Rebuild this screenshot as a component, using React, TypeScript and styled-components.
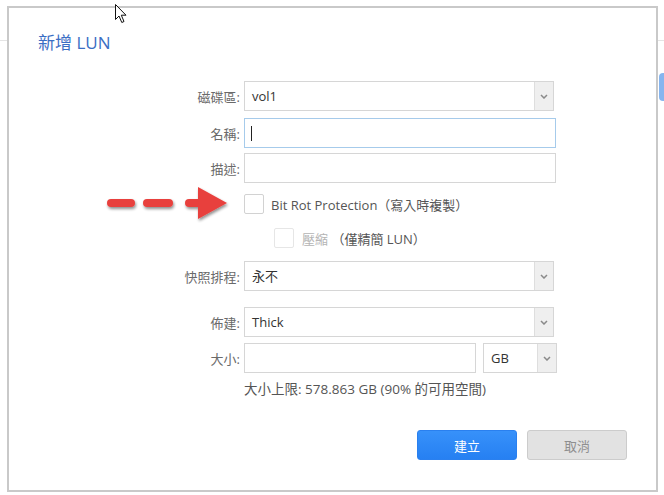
import React from "react";
import styled, { createGlobalStyle } from "styled-components";

const GlobalStyle = createGlobalStyle`
  html, body { margin: 0; padding: 0; background: #fff; }
  body { font-family: "Open Sans", "Noto Sans CJK TC", sans-serif; }
  * { box-sizing: border-box; }
`;

const Page = styled.div`
  position: relative;
  width: 664px;
  height: 495px;
  overflow: hidden;
  padding: 6px 0 0 7px;
  background: linear-gradient(to bottom, transparent 40px, #e4e4e4 40px, #e4e4e4 41px, transparent 41px);
`;

const SideTab = styled.div`
  position: absolute;
  right: 0;
  top: 73px;
  width: 5px;
  height: 28px;
  background: #86b5ef;
  border-radius: 4px 0 0 4px;
`;

const Dialog = styled.div`
  position: relative;
  width: 651px;
  height: 486px;
  background: #fff;
  border: 2px solid #c9c9c9;
  display: flex;
  flex-direction: column;
`;

const Title = styled.div`
  padding: 25px 0 0 29px;
  height: 54px;
  font-size: 17px;
  line-height: 20px;
  color: #3b6ec4;
  font-family: "Open Sans", "Noto Sans CJK TC", sans-serif;
`;

const Form = styled.div`
  display: flex;
  flex-direction: column;
  margin-top: 19px;
`;

const Row = styled.div<{ $mt?: number; $h?: number }>`
  display: grid;
  grid-template-columns: 231px auto;
  column-gap: 4px;
  align-items: center;
  margin-top: ${(p) => p.$mt ?? 0}px;
  height: ${(p) => p.$h ?? 30}px;
`;

const Label = styled.div`
  text-align: right;
  font-size: 13px;
  color: #6a6a6a;
  white-space: nowrap;
`;

const Field = styled.div`
  display: flex;
  align-items: center;
  gap: 7px;
`;

const SelectBox = styled.div<{ $w: number }>`
  width: ${(p) => p.$w}px;
  height: 30px;
  border: 1px solid #d6d6d6;
  display: flex;
  background: #fff;
`;

const SelectValue = styled.div`
  flex: 1;
  padding: 0 7px;
  font-size: 13px;
  color: #333;
  line-height: 28px;
`;

const ArrowCell = styled.div`
  width: 19px;
  background: #efefef;
  border-left: 1px solid #dedede;
  display: flex;
  align-items: center;
  justify-content: center;
`;

const TextInput = styled.div<{ $w: number; $focus?: boolean }>`
  width: ${(p) => p.$w}px;
  height: 30px;
  border: 1px solid ${(p) => (p.$focus ? "#a6cbeb" : "#d6d6d6")};
  background: #fff;
  display: flex;
  align-items: center;
  padding-left: 6px;
`;

const Caret = styled.span`
  width: 1px;
  height: 15px;
  background: #222;
`;

const CheckRow = styled.div<{ $indent?: number }>`
  display: flex;
  align-items: center;
  gap: 7px;
  padding-left: ${(p) => p.$indent ?? 0}px;
`;

const Box = styled.span<{ $disabled?: boolean }>`
  width: 20px;
  height: 20px;
  border: 1px solid ${(p) => (p.$disabled ? "#e6e6e6" : "#d2d2d2")};
  border-radius: 2px;
  background: #fff;
  margin-right: ${(p) => (p.$disabled ? 1 : 0)}px;
`;

const CheckText = styled.span<{ $muted?: boolean }>`
  font-size: 13px;
  color: ${(p) => (p.$muted ? "#b4b4b4" : "#555")};
  white-space: nowrap;
`;

const Note = styled.div`
  margin-top: 8px;
  padding-left: 235px;
  font-size: 13.5px;
  line-height: 16px;
  color: #555;
`;

const Buttons = styled.div`
  display: flex;
  justify-content: flex-end;
  gap: 10px;
  padding-right: 29px;
  margin-top: 33px;
`;

const Button = styled.button<{ $primary?: boolean }>`
  width: 100px;
  height: 30px;
  border-radius: 3px;
  font-size: 13px;
  font-family: "Open Sans", "Noto Sans CJK TC", sans-serif;
  border: 1px solid ${(p) => (p.$primary ? "#2a80ef" : "#cccccc")};
  background: ${(p) => (p.$primary ? "linear-gradient(#3791fa, #2680f2)" : "#e2e2e2")};
  color: ${(p) => (p.$primary ? "#fff" : "#8f8f8f")};
  padding: 0;
`;

const Pointer = styled.svg`
  position: absolute;
  left: 115px;
  top: 4px;
`;

const RedArrow = styled.svg`
  position: absolute;
  left: 100px;
  top: 183px;
`;

const Chevron = () => (
  <svg width="8" height="5" viewBox="0 0 8 5">
    <path d="M1 1 L4 4 L7 1" stroke="#8a8a8a" strokeWidth="1.5" fill="none" />
  </svg>
);

const Select = ({ value, w }: { value: string; w: number }) => (
  <SelectBox $w={w}>
    <SelectValue>{value}</SelectValue>
    <ArrowCell>
      <Chevron />
    </ArrowCell>
  </SelectBox>
);

export default function App() {
  return (
    <>
      <GlobalStyle />
      <Page>
        <SideTab />
        <Dialog>
          <Title>新增 LUN</Title>
          <Form>
            <Row>
              <Label>磁碟區:</Label>
              <Field>
                <Select value="vol1" w={310} />
              </Field>
            </Row>
            <Row $mt={7}>
              <Label>名稱:</Label>
              <Field>
                <TextInput $w={312} $focus>
                  <Caret />
                </TextInput>
              </Field>
            </Row>
            <Row $mt={5}>
              <Label>描述:</Label>
              <Field>
                <TextInput $w={312} />
              </Field>
            </Row>
            <Row $mt={11} $h={20}>
              <span />
              <CheckRow>
                <Box />
                <CheckText>Bit Rot Protection（寫入時複製）</CheckText>
              </CheckRow>
            </Row>
            <Row $mt={14} $h={20}>
              <span />
              <CheckRow $indent={30}>
                <Box $disabled />
                <CheckText $muted>
                  壓縮 <CheckText>（僅精簡 LUN）</CheckText>
                </CheckText>
              </CheckRow>
            </Row>
            <Row $mt={13}>
              <Label>快照排程:</Label>
              <Field>
                <Select value="永不" w={310} />
              </Field>
            </Row>
            <Row $mt={16}>
              <Label>佈建:</Label>
              <Field>
                <Select value="Thick" w={310} />
              </Field>
            </Row>
            <Row $mt={6}>
              <Label>大小:</Label>
              <Field>
                <TextInput $w={232} />
                <Select value="GB" w={74} />
              </Field>
            </Row>
            <Note>大小上限: 578.863 GB (90% 的可用空間)</Note>
          </Form>
          <Buttons>
            <Button $primary>建立</Button>
            <Button>取消</Button>
          </Buttons>
        </Dialog>
        <RedArrow width="135" height="42" viewBox="0 0 135 42">
          <defs>
            <filter id="sh" x="-20%" y="-40%" width="140%" height="180%">
              <feGaussianBlur in="SourceAlpha" stdDeviation="1.5" />
              <feOffset dx="1" dy="2" result="b" />
              <feComponentTransfer>
                <feFuncA type="linear" slope="0.45" />
              </feComponentTransfer>
              <feMerge>
                <feMergeNode />
                <feMergeNode in="SourceGraphic" />
              </feMerge>
            </filter>
          </defs>
          <g filter="url(#sh)" fill="#e8413e">
            <rect x="7" y="16" width="28" height="8" rx="4" />
            <rect x="43" y="16" width="30" height="8" rx="4" />
            <rect x="85" y="16" width="18" height="8" rx="4" />
            <path d="M98 4 L127 20 L98 36 Z" />
          </g>
        </RedArrow>
        <Pointer width="14" height="20" viewBox="0 0 14 20">
          <path
            d="M0.5 0.5 L0.5 15.5 L4 12 L6.8 18.5 L9 17.5 L6.3 11.2 L11 11.2 Z"
            fill="#fff"
            stroke="#111"
            strokeWidth="1"
            strokeLinejoin="round"
          />
        </Pointer>
      </Page>
    </>
  );
}
